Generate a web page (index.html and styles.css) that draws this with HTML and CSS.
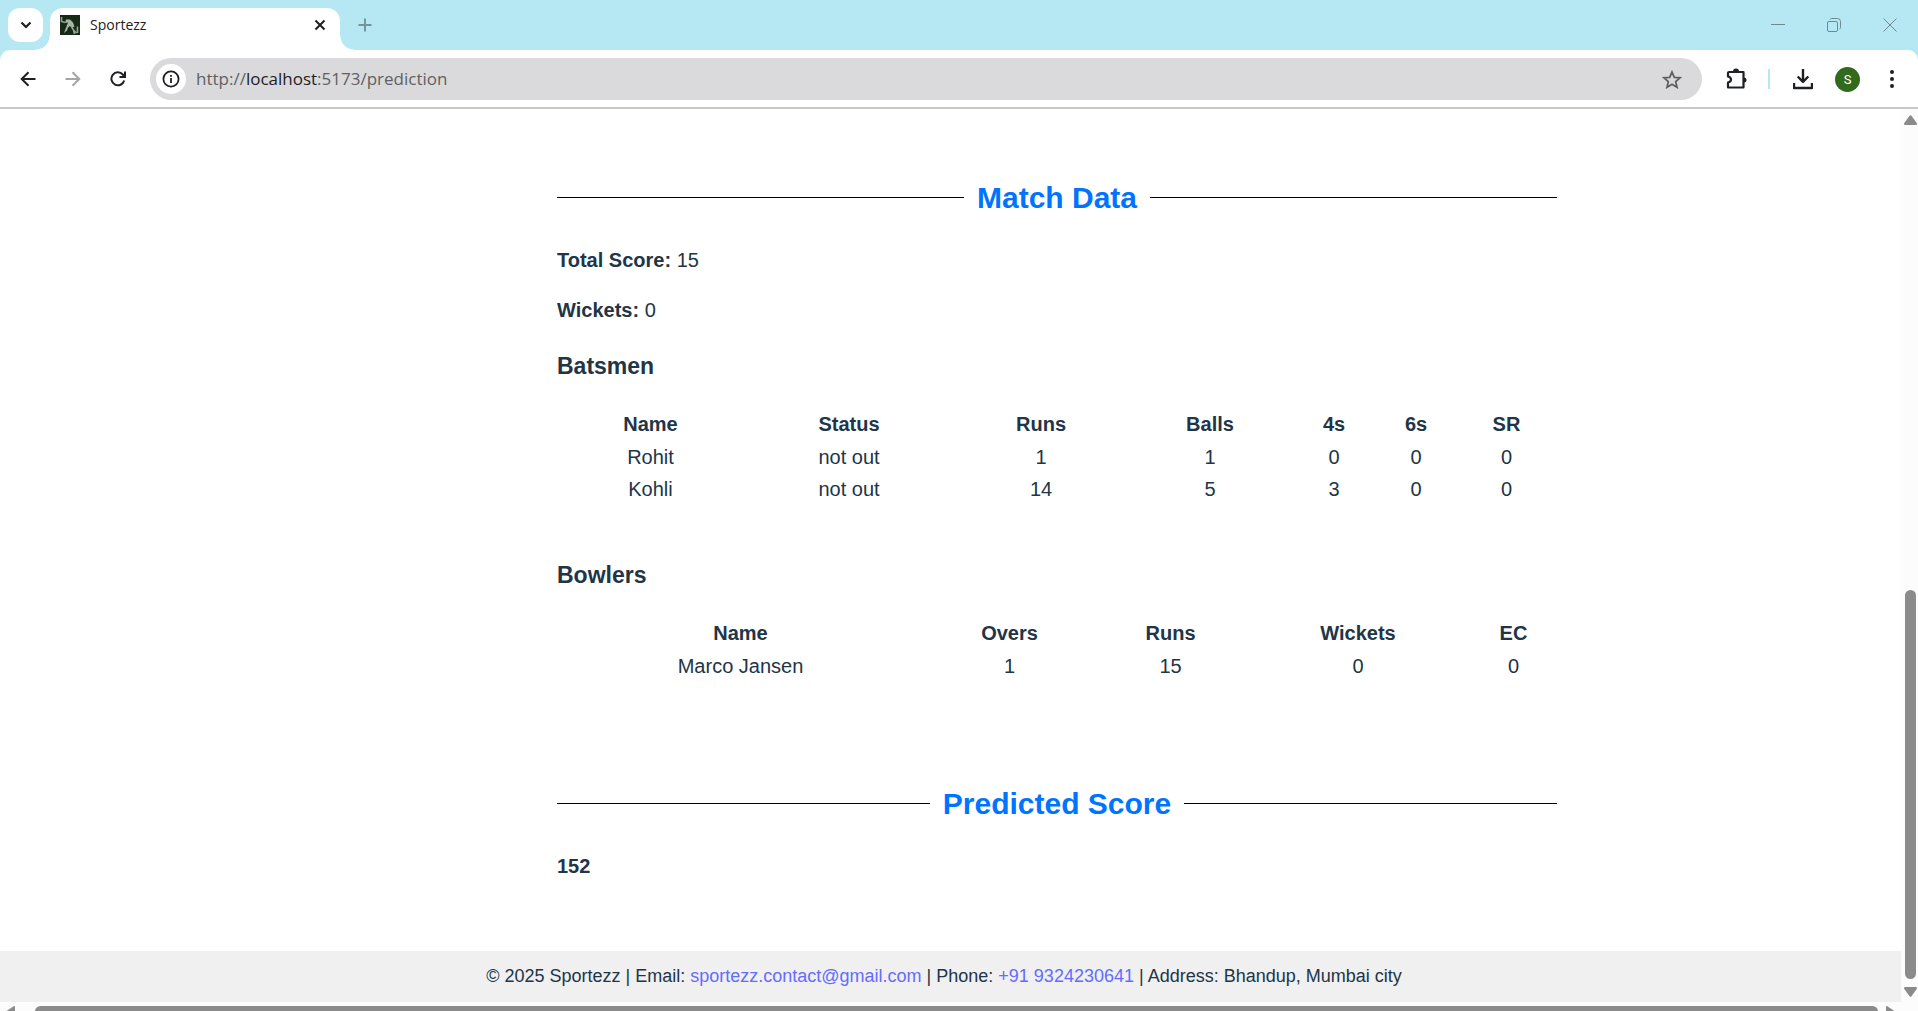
FILE: index.html
```html
<!DOCTYPE html>
<html lang="en">
<head>
<meta charset="utf-8">
<title>Sportezz</title>
<link rel="stylesheet" href="styles.css">
</head>
<body>
<div class="browser">
  <header class="tabstrip">
    <button class="tab-search" aria-label="Search tabs"><svg width="12" height="8" viewBox="0 0 12 8"><path d="M1.5 1.5 6 6l4.500-4.500" fill="none" stroke="#1f2023" stroke-width="2.200"/></svg></button>
    <div class="tab">
      <svg class="favicon" width="20" height="20" viewBox="0 0 20 20"><rect width="20" height="20" fill="#182a16"/><path d="M1.500 2v4.500L5 7.500" fill="none" stroke="#93a292" stroke-width="1.600"/><path d="M6 4.500h4l3 3 1.500 4L12 13l-2-2-2 1.500-1 3-3 2.500 1.500-4L7 10l1-2.500-3 .5z" fill="#a7b5a6"/><path d="m11 11 2.500 4 1 4M13.500 15l3 3M17.500 11.500V18" fill="none" stroke="#93a292" stroke-width="1.600"/></svg>
      <span class="tab-title">Sportezz</span>
      <button class="tab-close" aria-label="Close tab"><svg width="12" height="12" viewBox="0 0 12 12"><path d="m1.500 1.500 9 9m0-9-9 9" stroke="#1f2023" stroke-width="2"/></svg></button>
    </div>
    <button class="new-tab" aria-label="New tab"><svg width="14" height="14" viewBox="0 0 14 14"><path d="M7 .5v13M.5 7h13" stroke="#74959c" stroke-width="2"/></svg></button>
    <div class="window-controls">
      <button aria-label="Minimize"><svg width="14" height="14" viewBox="0 0 14 14"><path d="M0 6.500h14" stroke="#6c8b91"/></svg></button>
      <button aria-label="Restore"><svg width="14" height="14" viewBox="0 0 14 14"><g fill="none" stroke="#6c8b91"><rect x=".5" y="3.500" width="10" height="10" rx="1.500"/><path d="M3 1.500q.3-1 1.500-1h6q3 0 3 3v6q0 1.200-1 1.500"/></g></svg></button>
      <button aria-label="Close"><svg width="14" height="14" viewBox="0 0 14 14"><path d="m.5.5 13 13m0-13-13 13" stroke="#6c8b91"/></svg></button>
    </div>
  </header>
  <nav class="toolbar" aria-label="Browser toolbar">
    <div class="nav-buttons">
      <button aria-label="Back"><svg width="16" height="16" viewBox="0 0 16 16"><path d="M15.500 8H2M8.500 1.200 1.700 8l6.800 6.800" fill="none" stroke="#1f2023" stroke-width="2"/></svg></button>
      <button aria-label="Forward"><svg width="16" height="16" viewBox="0 0 16 16"><path d="M.5 8H14M7.500 1.200 14.300 8l-6.800 6.800" fill="none" stroke="#a5a5a6" stroke-width="2"/></svg></button>
      <button aria-label="Reload"><svg width="16" height="16" viewBox="0 0 16 16"><path d="M14.200 9.500A6.500 6.500 0 1 1 12.800 3.500L14.500 5.500M15 .5V6H9.500" fill="none" stroke="#1f2023" stroke-width="2"/></svg></button>
    </div>
    <div class="address">
      <button class="site-info" aria-label="Site information"><svg width="18" height="18" viewBox="0 0 18 18"><circle cx="9" cy="9" r="7.600" fill="none" stroke="#1f2023" stroke-width="1.800"/><path d="M9 8v5M9 5v1.800" stroke="#1f2023" stroke-width="1.800"/></svg></button>
      <span class="url">http://<span class="host">localhost</span>:5173/prediction</span>
      <button class="bookmark" aria-label="Bookmark this page"><svg width="20" height="19" viewBox="0 0 20 19"><path d="m10 2 2.300 5.300 5.700.5-4.300 3.800 1.300 5.700-5-3-5 3 1.300-5.700L2 7.800l5.700-.5z" fill="none" stroke="#5f6063" stroke-width="1.800"/></svg></button>
    </div>
    <div class="actions">
      <button aria-label="Extensions"><svg width="22" height="22" viewBox="0 0 22 22"><path d="M3 4h14.500v15.500H2V14.500c4-1 4-5 0-6V5q0-1 1-1z" fill="none" stroke="#1f2023" stroke-width="2.200" stroke-linejoin="round"/><path d="M7 3.500a3 3 0 0 1 6 0zM18 9.500a2.500 2.500 0 0 1 0 5z" fill="#1f2023"/></svg></button>
      <span class="divider"></span>
      <button aria-label="Downloads"><svg width="20" height="22" viewBox="0 0 20 22"><path d="M10 1v12M4.700 8.500 10 13.800l5.300-5.300M1 15v5h18v-5" fill="none" stroke="#1f2023" stroke-width="2.400" stroke-linejoin="round"/></svg></button>
      <button class="avatar" aria-label="Profile">S</button>
      <button aria-label="Menu"><svg width="4" height="18" viewBox="0 0 4 18"><g fill="#1f2023"><circle cx="2" cy="2" r="2"/><circle cx="2" cy="9" r="2"/><circle cx="2" cy="16" r="2"/></g></svg></button>
    </div>
  </nav>
  <div class="viewport">
    <div class="page">
      <main class="content">
        <div class="column">
          <section class="match">
            <h2 class="ruled">Match Data</h2>
            <p><strong>Total Score:</strong> 15</p>
            <p><strong>Wickets:</strong> 0</p>
            <h3>Batsmen</h3>
            <table class="batsmen">
              <thead><tr><th>Name</th><th>Status</th><th>Runs</th><th>Balls</th><th>4s</th><th>6s</th><th>SR</th></tr></thead>
              <tbody>
                <tr><td>Rohit</td><td>not out</td><td>1</td><td>1</td><td>0</td><td>0</td><td>0</td></tr>
                <tr><td>Kohli</td><td>not out</td><td>14</td><td>5</td><td>3</td><td>0</td><td>0</td></tr>
              </tbody>
            </table>
            <h3>Bowlers</h3>
            <table class="bowlers">
              <thead><tr><th>Name</th><th>Overs</th><th>Runs</th><th>Wickets</th><th>EC</th></tr></thead>
              <tbody><tr><td>Marco Jansen</td><td>1</td><td>15</td><td>0</td><td>0</td></tr></tbody>
            </table>
          </section>
          <section>
            <h2 class="ruled">Predicted Score</h2>
            <p><strong>152</strong></p>
          </section>
        </div>
      </main>
      <footer class="footer">© 2025 Sportezz | Email: <a href="mailto:sportezz.contact@gmail.com">sportezz.contact@gmail.com</a> | Phone: <a href="tel:+919324230641">+91 9324230641</a> | Address: Bhandup, Mumbai city</footer>
      <div class="hscroll">
        <svg width="10" height="12" viewBox="0 0 10 12"><path d="M10 1v10q0 1-1 1L0 6 9 0q1 0 1 1z" fill="#8b8b8b"/></svg>
        <span class="hthumb"></span>
        <svg width="10" height="12" viewBox="0 0 10 12"><path d="M0 1v10q0 1 1 1l9-6L1 0Q0 0 0 1z" fill="#8b8b8b"/></svg>
      </div>
    </div>
    <div class="vscroll">
      <svg width="13" height="10" viewBox="0 0 13 10"><path d="M1 10h11q1.500-.5.700-2L7.500.8q-1-1.200-2 0L.3 8Q-.5 9.500 1 10z" fill="#8b8b8b"/></svg>
      <div class="vtrack"><span class="vthumb"></span></div>
      <svg width="13" height="10" viewBox="0 0 13 10"><path d="M1 0h11q1.500.5.700 2L7.500 9.200q-1 1.200-2 0L.3 2Q-.5.500 1 0z" fill="#8b8b8b"/></svg>
    </div>
  </div>
</div>
</body>
</html>
```
FILE: styles.css
```css
* { box-sizing: border-box; }

body {
  margin: 0;
  background: #fff;
  color: #213547;
  font: 20px/30px "Liberation Sans", Arial, sans-serif;
}

button {
  display: flex;
  align-items: center;
  justify-content: center;
  padding: 0;
  border: 0;
  background: none;
}

svg { display: block; flex: none; }

.browser {
  display: flex;
  flex-direction: column;
  height: 100vh;
  overflow: hidden;
  background: #b5e8f2;
}

/* Tab strip */
.tabstrip {
  display: flex;
  flex: none;
  height: 50px;
  padding: 8px 0 0 8px;
}

.tab-search {
  width: 35px;
  height: 34px;
  border-radius: 12px;
  background: #fff;
}

.tab {
  position: relative;
  display: flex;
  align-items: center;
  width: 290px;
  margin-left: 7px;
  padding: 0 14px 8px 10px;
  border-radius: 13px 13px 0 0;
  background: #fff;
}

.tab::before,
.tab::after {
  content: "";
  position: absolute;
  bottom: 0;
  width: 14px;
  height: 14px;
}

.tab::before {
  right: 100%;
  background: radial-gradient(circle at 0 0, transparent 13px, #fff 14px);
}

.tab::after {
  left: 100%;
  background: radial-gradient(circle at 100% 0, transparent 13px, #fff 14px);
}

.tab-title {
  flex: 1;
  margin-left: 10px;
  color: #1f2023;
  font: 14px/20px "Open Sans", sans-serif;
}

.new-tab { width: 28px; height: 34px; margin-left: 11px; }

.window-controls {
  display: flex;
  height: 34px;
  margin-left: auto;
}

.window-controls button { width: 56px; }

/* Toolbar */
.toolbar {
  display: flex;
  flex: none;
  align-items: center;
  height: 59px;
  padding: 1px 24px 0 20px;
  border-bottom: 2px solid #c8c8c9;
  border-radius: 10px 10px 0 0;
  background: #fff;
}

.nav-buttons { display: flex; gap: 29px; }

.address {
  display: flex;
  flex: 1;
  align-items: center;
  height: 42px;
  margin-left: 24px;
  padding: 0 20px 0 6px;
  border-radius: 21px;
  background: #dadadc;
}

.site-info {
  width: 30px;
  height: 30px;
  border-radius: 50%;
  background: #fff;
}

.url {
  flex: 1;
  margin-left: 10px;
  color: #5f6063;
  font: 17px/24px "Open Sans", sans-serif;
}

.host { color: #1f2023; }

.actions {
  display: flex;
  align-items: center;
  margin-left: 24px;
}

.divider {
  width: 2px;
  height: 20px;
  margin: 0 23px 0 20px;
  background: #b5e8f2;
}

.avatar {
  width: 25px;
  height: 25px;
  margin: 0 30px 0 22px;
  border-radius: 50%;
  background: #31691d;
  color: #fff;
  font: 13px/25px Roboto, sans-serif;
}

/* Page area */
.viewport {
  display: flex;
  flex: 1;
  min-height: 0;
  background: #fff;
}

.page {
  display: flex;
  flex: 1;
  flex-direction: column;
}

.content {
  flex: 1;
  padding: 66px 0 0 213px;
}

.column { max-width: 1000px; margin: 0 auto; }

.match { margin-bottom: 99px; }

.ruled {
  display: flex;
  align-items: center;
  gap: 13px;
  margin: 0 0 25px;
  color: #0074ff;
  font-size: 30px;
  line-height: 45px;
}

.ruled::before,
.ruled::after {
  content: "";
  flex: 1;
  height: 1px;
  background: #000;
}

p { margin: 0 0 20px; }

h3 {
  margin: 24px 0;
  font-size: 23px;
  line-height: 35px;
}

table {
  width: 100%;
  margin-bottom: 53px;
  border-collapse: collapse;
  table-layout: fixed;
  text-align: center;
}

th, td { padding: 1px 0; }
th { padding-bottom: 2px; }

.batsmen th:nth-child(1) { width: 187px; }
.batsmen th:nth-child(2) { width: 210px; }
.batsmen th:nth-child(3) { width: 174px; }
.batsmen th:nth-child(4) { width: 164px; }
.batsmen th:nth-child(5) { width: 84px; }
.batsmen th:nth-child(6) { width: 80px; }
.batsmen th:nth-child(7) { width: 101px; }

.bowlers th:nth-child(1) { width: 367px; }
.bowlers th:nth-child(2) { width: 171px; }
.bowlers th:nth-child(3) { width: 151px; }
.bowlers th:nth-child(4) { width: 224px; }
.bowlers th:nth-child(5) { width: 87px; }

.footer {
  padding: 12px 13px 12px 0;
  background: #f0f0f0;
  font-size: 18px;
  line-height: 27px;
  text-align: center;
}

.footer a { color: #646cff; text-decoration: none; }

/* Scrollbars */
.hscroll {
  display: flex;
  height: 9px;
  padding: 4px 5px 0;
  overflow: hidden;
  background: #fcfcfc;
}

.hthumb {
  flex: 1;
  height: 11px;
  margin: 0 8px 0 20px;
  border-radius: 6px;
  background: #8b8b8b;
}

.vscroll {
  display: flex;
  flex-direction: column;
  align-items: center;
  gap: 8px;
  width: 17px;
  padding: 6px 0 14px 2px;
  background: #fcfcfc;
}

.vtrack {
  display: flex;
  flex: 1;
  flex-direction: column;
  justify-content: flex-end;
}

.vthumb {
  width: 11px;
  height: 46%;
  border-radius: 6px;
  background: #8b8b8b;
}
```
